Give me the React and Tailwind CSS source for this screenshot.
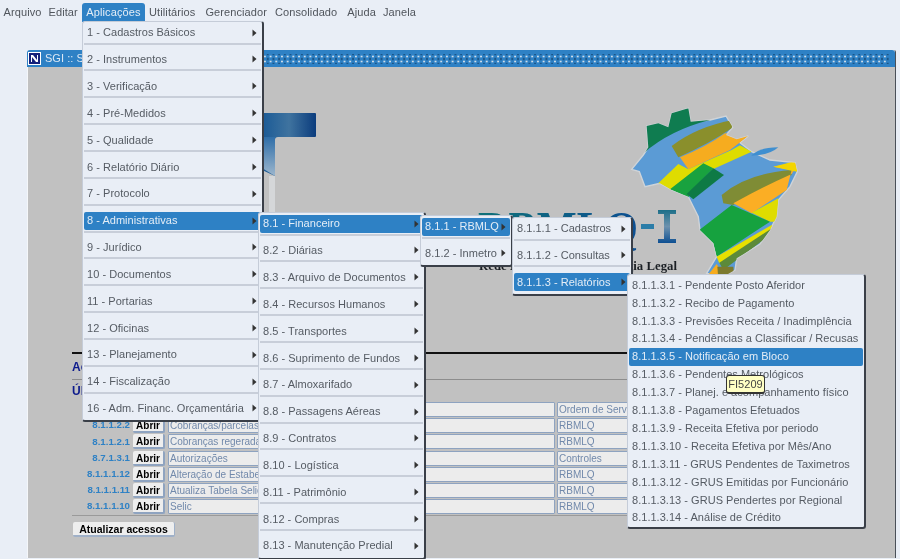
import React from "react";

const menuBar = [
  { label: "Arquivo", className: "" },
  { label: "Editar", className: "" },
  { label: "Aplicações", className: "ml-[1px] px-[4px] bg-[#2e81c5] !text-[#e4edf6]" },
  { label: "Utilitários", className: "ml-[1px]" },
  { label: "Gerenciador", className: "ml-[3px]" },
  { label: "Consolidado", className: "ml-[1px]" },
  { label: "Ajuda", className: "ml-[3px]" },
  { label: "Janela", className: "" },
];

const aplicacoes = [
  "1 - Cadastros Básicos", "2 - Instrumentos", "3 - Verificação", "4 - Pré-Medidos", "5 - Qualidade",
  "6 - Relatório Diário", "7 - Protocolo", "8 - Administrativas", "9 - Jurídico", "10 - Documentos",
  "11 - Portarias", "12 - Oficinas", "13 - Planejamento", "14 - Fiscalização", "16 - Adm. Financ. Orçamentária",
];

const administrativas = [
  "8.1 - Financeiro", "8.2 - Diárias", "8.3 - Arquivo de Documentos", "8.4 - Recursos Humanos", "8.5 - Transportes",
  "8.6 - Suprimento de Fundos", "8.7 - Almoxarifado", "8.8 - Passagens Aéreas", "8.9 - Contratos", "8.10 - Logística",
  "8.11 - Patrimônio", "8.12 - Compras", "8.13 - Manutenção Predial",
];

const relatorios = [
  "8.1.1.3.1 - Pendente Posto Aferidor", "8.1.1.3.2 - Recibo de Pagamento", "8.1.1.3.3 - Previsões Receita / Inadimplência",
  "8.1.1.3.4 - Pendências a Classificar / Recusas", "8.1.1.3.5 - Notificação em Bloco", "8.1.1.3.6 - Pendentes Metrológicos",
  "8.1.1.3.7 - Planej. e acompanhamento físico", "8.1.1.3.8 - Pagamentos Efetuados", "8.1.1.3.9 - Receita Efetiva por periodo",
  "8.1.1.3.10 - Receita Efetiva por Mês/Ano", "8.1.1.3.11 - GRUS Pendentes de Taximetros", "8.1.1.3.12 - GRUS Emitidas por Funcionário",
  "8.1.1.3.13 - GRUS Pendertes por Regional", "8.1.1.3.14 - Análise de Crédito",
];

const acessos = [
  { code: "", name: "", group: "Ordem de Serv" },
  { code: "8.1.1.2.2", name: "Cobranças/parcelas", group: "RBMLQ" },
  { code: "8.1.1.2.1", name: "Cobranças regeradas", group: "RBMLQ" },
  { code: "8.7.1.3.1", name: "Autorizações", group: "Controles" },
  { code: "8.1.1.1.12", name: "Alteração de Estabelecimento", group: "RBMLQ" },
  { code: "8.1.1.1.11", name: "Atualiza Tabela Selic", group: "RBMLQ" },
  { code: "8.1.1.1.10", name: "Selic", group: "RBMLQ" },
];

function Arrow() {
  return (
    <svg width="5" height="8" viewBox="0 0 5 8" className="shrink-0">
      <path d="M0.5 0.5 L4.5 4 L0.5 7.5 Z" fill="#333" />
    </svg>
  );
}

// menu com itens altos e separador entre eles
function Menu({ items, active, className }) {
  return (
    <div className={`absolute flex flex-col px-[1px] bg-[#e9eef6] border border-[#c5ccd8] border-r-2 border-b-2 border-r-[#3a3f48] border-b-[#3a3f48] rounded-[3px] ${className}`}>
      {items.map((label, i) => (
        <div key={label} className="h-[26.85px] first:h-[22.6px] last:border-b-transparent flex flex-col justify-end pb-px border-b-2 border-[#c8ced9]">
          <div className={`h-[18px] flex items-center justify-between pl-[3px] pr-[4px] rounded-[2px] ${i === active ? "bg-[#2e81c5] text-[#e4edf6]" : "text-[#555b63]"}`}>
            <span className="whitespace-nowrap">{label}</span>
            <Arrow />
          </div>
        </div>
      ))}
    </div>
  );
}

function BrazilMap() {
  // coordenadas do recorte 3x da região do mapa
  const outline =
    "M95 388 L130 345 L145 322 L140 258 L175 250 L205 262 L215 220 L265 205 L272 245 L330 240 L378 228 L398 262 L378 285 L410 298 L445 288 L420 308 L455 335 L510 360 L585 368 L592 395 L570 440 L535 480 L530 530 L510 570 L480 612 L410 655 L405 690 L370 710 L320 700 L350 650 L340 610 L300 570 L295 530 L265 470 L215 450 L180 430 L135 440 L118 395 Z";
  return (
    <g transform="translate(600 40) scale(0.3333)">
      <defs>
        <clipPath id="brasil">
          <path d={outline} />
        </clipPath>
      </defs>
      <path d={outline} fill="#5b9bd5" stroke="#d0d4d8" strokeWidth="4" />
      <g clipPath="url(#brasil)">
        <path d="M80 400 L130 340 Q210 270 330 240 L280 150 L60 200 Z" fill="#0f7c50" />
        <path d="M215 318 Q290 260 400 240 L395 265 Q330 310 235 352 Z" fill="#8a8f2c" />
        <path d="M240 352 Q320 320 375 280 L445 288 L390 330 L265 388 Z" fill="#f6ac1f" />
        <path d="M175 430 L235 372 L265 388 L395 330 L420 316 L455 335 L345 385 L215 450 Z" fill="#dfdc00" />
        <path d="M210 448 L310 370 L340 385 L300 425 L265 472 Z" fill="#19a23f" />
        <path d="M260 462 L340 385 L372 405 L280 478 Z" fill="#0e7a45" />
        <path d="M365 465 Q440 400 575 390 L575 405 Q480 445 400 495 L370 490 Z" fill="#7f8c35" />
        <path d="M400 490 Q490 440 575 402 L600 365 L520 380 L575 390 L560 450 L455 520 Z" fill="#fbae24" />
        <path d="M520 380 L590 362 L592 395 L575 392 Z" fill="#f3d500" />
        <path d="M455 518 L535 475 L535 545 L510 545 Z" fill="#dfdc00" />
        <path d="M298 570 L395 495 L510 545 L350 650 L340 610 Z" fill="#16a23f" />
        <path d="M350 650 L515 555 L525 565 L358 670 Z" fill="#e7e000" />
        <path d="M358 668 L520 562 L490 600 L370 690 Z" fill="#5c8a3a" />
        <path d="M320 710 L350 672 L375 715 Z" fill="#f6ac1f" />
        <path d="M352 680 L400 680 L402 715 L355 715 Z" fill="#7c7a2e" />
      </g>
      <path d="M455 345 Q480 322 535 322 Q510 345 455 347 Z" fill="#3f8fd0" />
    </g>
  );
}

function Logos() {
  return (
    <svg viewBox="28 67 867 286" className="w-[867px] h-[286px] shrink-0">
      <defs>
        <linearGradient id="azul" x1="262" x2="316" y1="0" y2="0" gradientUnits="userSpaceOnUse">
          <stop offset="0" stopColor="#1a5a96" />
          <stop offset="0.5" stopColor="#3f739f" />
          <stop offset="1" stopColor="#0b3c7d" />
        </linearGradient>
        <linearGradient id="queda" x1="0" x2="0" y1="0" y2="1">
          <stop offset="0" stopColor="#2f6ea8" />
          <stop offset="1" stopColor="#9cb6cd" />
        </linearGradient>
        <linearGradient id="rbmlq" x1="0" x2="1" y1="0" y2="0">
          <stop offset="0" stopColor="#0f7178" />
          <stop offset="1" stopColor="#0d4f92" />
        </linearGradient>
        <linearGradient id="letraI" x1="0" x2="0" y1="0" y2="1">
          <stop offset="0" stopColor="#1c6f88" />
          <stop offset="0.5" stopColor="#6d92ae" />
          <stop offset="1" stopColor="#0d4f92" />
        </linearGradient>
      </defs>
      <path d="M240 113 H315 Q316 113 316 114 V136 Q316 137 315 137 H278 Q275 137 275 140 V176 L262 170 V113 Z" fill="url(#azul)" />
      <path d="M262 137 H275 V176 L262 168 Z" fill="url(#queda)" />
      <rect x="269" y="176" width="6" height="36" fill="#d5d7d9" />
      <text x="478" y="244" fontFamily="'Liberation Serif', serif" fontWeight="700" fontSize="47" textLength="160" lengthAdjust="spacingAndGlyphs" fill="url(#rbmlq)">RBMLQ</text>
      <rect x="641" y="224" width="13" height="5" fill="#2b7da8" />
      <path d="M658 210 H676 V214 H670 V239 H676 V243 H658 V239 H664 V214 H658 Z" fill="url(#letraI)" />
      <text x="479" y="270" fontFamily="'Liberation Serif', serif" fontWeight="700" fontSize="13" textLength="198" lengthAdjust="spacingAndGlyphs" fill="#1b1f24">Rede Brasileira de Metrologia Legal</text>
      <BrazilMap />
    </svg>
  );
}

export default function App() {
  return (
    <div className="relative w-[900px] h-[559px] overflow-hidden bg-[#e9eef6] text-[11px] tracking-[0.03px] blur-[0.5px]" style={{ fontFamily: "'Liberation Sans', Arial, sans-serif" }}>
      {/* barra de menu */}
      <div className="flex items-center h-[24px] pt-px tracking-[0.1px]">
        {menuBar.map((m) => (
          <div key={m.label} className={`h-[19px] flex items-center px-[3.5px] rounded-t-[3px] text-[#50555c] ${m.className}`}>
            {m.label}
          </div>
        ))}
      </div>

      {/* janela SGI */}
      <div className="ml-[27px] mt-[26px] w-[869px] h-[508px] flex flex-col border-r border-[#4a5058] rounded-t-[2px]">
        <div className="h-[17px] shrink-0 flex items-center bg-[#2e81c5] pl-[1px] rounded-t-[3px]">
          <svg width="13" height="13" viewBox="0 0 13 13" className="shrink-0">
            <rect width="13" height="13" fill="#fff" />
            <rect x="1" y="1" width="11" height="11" fill="#14207a" />
            <path d="M3 3 H5 L9 8 V3 H10 V10 H8 L4 5 V10 H3 Z" fill="#fff" />
          </svg>
          <span className="ml-[4px] w-[200px] shrink-0 text-[#dce8f4] whitespace-nowrap">SGI :: Sistema</span>
          <div className="flex-1 h-[10px] mr-[6px] bg-[radial-gradient(circle,#cfdde9_0.9px,transparent_1.2px),radial-gradient(circle,#123f68_0.9px,transparent_1.2px)] bg-[length:5.7px_5px] bg-[position:0_0,2.85px_2.5px]" />
        </div>

        <div className="flex-1 flex flex-col border-l border-[#f4f6f9] bg-[#c1c1c1] overflow-hidden">
          <Logos />
          <div className="ml-[44px] w-[700px] h-[2px] -mt-[1px] bg-[#111] shrink-0" />
          <div className="ml-[44px] mt-[6px] h-[14px] font-bold text-[#0c1a8c] text-[12px] leading-[14px]">Acessos</div>
          <div className="ml-[44px] w-[700px] h-px mt-[5px] bg-[#8d8d8d] shrink-0" />
          <div className="ml-[44px] mt-[4px] h-[14px] font-bold text-[#0c1a8c] text-[12px] leading-[14px]">Últimos</div>

          <div className="mt-[4px] flex flex-col gap-[1.2px] shrink-0">
            {acessos.map((r, i) => (
              <div key={i} className="flex items-center h-[15px] text-[10px] tracking-normal">
                <div className="w-[102px] shrink-0 text-right font-bold text-[#2e81c5] text-[9.7px]">{r.code}</div>
                <button className="ml-[3px] w-[32px] h-[15px] shrink-0 bg-[#eeeeee] border-r-2 border-b-2 border-[#8ea3c0] rounded-[2px] font-bold text-black text-[10px]">Abrir</button>
                <div className="ml-[3px] w-[387px] h-[15px] shrink-0 pl-[1px] bg-[#ececec] border border-[#8ea3c0] rounded-[1px] text-[#7189ab] leading-[13px] whitespace-nowrap overflow-hidden">{r.name}</div>
                <div className="ml-[2px] w-[150px] h-[15px] shrink-0 pl-[1px] bg-[#ececec] border border-[#8ea3c0] rounded-[1px] text-[#7189ab] leading-[13px] whitespace-nowrap overflow-hidden">{r.group}</div>
              </div>
            ))}
          </div>

          <div className="ml-[44px] w-[700px] h-px mt-[1px] bg-[#9a9a9a] shrink-0" />
          <button className="ml-[45px] mt-[6px] w-[102px] h-[15px] shrink-0 bg-[#eeeeee] border-r border-b-2 border-[#9fb0c8] rounded-[2px] font-bold text-black text-[10.5px] tracking-normal leading-[12px]">Atualizar acessos</button>
        </div>
      </div>

      {/* menus abertos */}
      <Menu items={aplicacoes} active={7} className="left-[82px] top-[21px] w-[182px]" />
      <Menu items={administrativas} active={0} className="left-[258px] top-[212px] w-[168px]" />
      <Menu items={["8.1.1 - RBMLQ", "8.1.2 - Inmetro"]} active={0} className="left-[420px] top-[215px] w-[93px]" />
      <Menu items={["8.1.1.1 - Cadastros", "8.1.1.2 - Consultas", "8.1.1.3 - Relatórios"]} active={2} className="left-[512px] top-[217px] w-[121px]" />

      <div className="absolute left-[627px] top-[274px] w-[239px] h-[255px] pt-[1px] px-[1px] flex flex-col bg-[#e9eef6] border border-[#c5ccd8] border-r-2 border-b-2 border-r-[#3a3f48] border-b-[#3a3f48] rounded-[3px]">
        {relatorios.map((label, i) => (
          <div key={label} className={`h-[17.92px] shrink-0 flex items-center pl-[3px] rounded-[2px] whitespace-nowrap ${i === 4 ? "bg-[#2e81c5] text-[#e4edf6]" : "text-[#555b63]"}`}>
            {label}
          </div>
        ))}
      </div>

      <div className="absolute left-[726px] top-[375px] w-[39px] h-[19px] flex items-center justify-center bg-[#ffffc4] border border-[#333] border-b-2 rounded-[3px] text-[#444] text-[11px]">FI5209</div>
    </div>
  );
}
